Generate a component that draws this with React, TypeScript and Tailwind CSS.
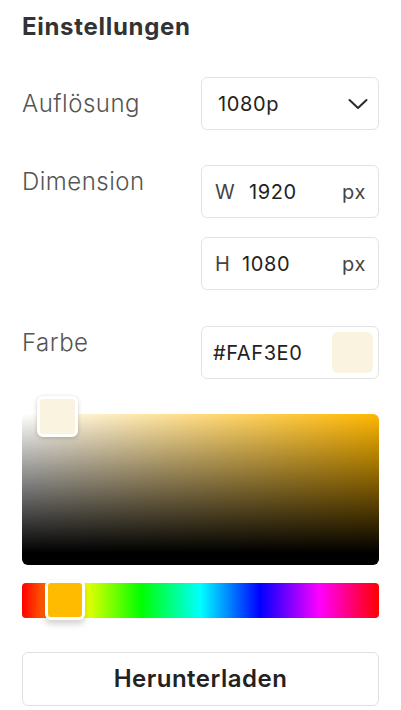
import React from 'react';

const font = { fontFamily: 'Inter, "Noto Sans", sans-serif' };

function Field({ children, className = '' }: { children: React.ReactNode; className?: string }) {
  return (
    <div className={`flex h-[53px] items-center rounded-md border border-[#e3e3e3] bg-white ${className}`}>
      {children}
    </div>
  );
}

export default function App() {
  return (
    <div className="min-h-[710px] w-[401px] bg-white px-[22px] pt-[13px]" style={font}>
      {/* Title */}
      <h1 className="text-[24px] font-bold leading-[28px] tracking-[0.7px] text-[#333]">Einstellungen</h1>

      <div className="mt-[36px] grid grid-cols-[179px_1fr]">
        {/* Auflösung */}
        <div className="flex items-center text-[24px] font-light tracking-[0.5px] text-[#555]">Auflösung</div>
        <Field className="h-[52px] justify-between pl-[16px] pr-[10px]">
          <span className="text-[20px] tracking-[0.6px] text-[#222]">1080p</span>
          <svg width="20" height="12" viewBox="0 0 20 12" fill="none">
            <polyline points="1.5,2 10,10 18.5,2" stroke="#2a2a2a" strokeWidth="2" strokeLinecap="round" strokeLinejoin="round" />
          </svg>
        </Field>

        {/* Dimension */}
        <div className="mt-[35px] pt-[3px] text-[24px] font-light leading-[28px] tracking-[0.5px] text-[#555]">Dimension</div>
        <div className="mt-[35px] flex flex-col gap-[19px]">
          <Field className="pl-[13px] pr-[12px] text-[20px] tracking-[0.6px]">
            <span className="w-[34px] text-[#444]">W</span>
            <span className="flex-1 text-[#222]">1920</span>
            <span className="text-[#444]">px</span>
          </Field>
          <Field className="pl-[13px] pr-[12px] text-[20px] tracking-[0.6px]">
            <span className="w-[27px] text-[#444]">H</span>
            <span className="flex-1 text-[#222]">1080</span>
            <span className="text-[#444]">px</span>
          </Field>
        </div>

        {/* Farbe */}
        <div className="mt-[36px] pt-[3px] text-[24px] font-light leading-[28px] tracking-[0.5px] text-[#555]">Farbe</div>
        <Field className="mt-[36px] justify-between pl-[11px] pr-[5px]">
          <span className="text-[20px] tracking-[0.6px] text-[#222]">#FAF3E0</span>
          <div className="h-[41px] w-[41px] rounded-md bg-[#FAF3E0]" />
        </Field>
      </div>

      {/* Saturation / value area */}
      <div
        className="relative mt-[35px] h-[151px] rounded-md"
        style={{
          background:
            'linear-gradient(to top, #000 8%, rgba(0,0,0,0) 100%), linear-gradient(to right, #fff 0%, rgba(255,255,255,0) 100%), hsl(43, 100%, 50%)',
        }}
      >
        <div className="absolute left-[15px] top-[-18px] h-[41px] w-[41px] rounded-md border-[3px] border-white bg-[#FAF3E0] shadow-[0_1px_4px_rgba(0,0,0,0.2)]" />
      </div>

      {/* Hue bar */}
      <div
        className="relative mt-[18px] h-[35px] rounded-[4px]"
        style={{
          background:
            'linear-gradient(to right, #f00 0%, #ff0 16.66%, #0f0 33.33%, #0ff 50%, #00f 66.66%, #f0f 83.33%, #f00 100%)',
        }}
      >
        <div className="absolute left-[23px] top-[-3px] h-[40px] w-[40px] rounded-md border-[3px] border-white bg-[#FFBB00] shadow-[0_4px_6px_rgba(0,0,0,0.18)]" />
      </div>

      {/* Download */}
      <button className="mt-[34px] flex h-[54px] w-full items-center justify-center rounded-md border border-[#e0e0e0] bg-white text-[24px] font-semibold tracking-[0.5px] text-[#222]">
        Herunterladen
      </button>
    </div>
  );
}
